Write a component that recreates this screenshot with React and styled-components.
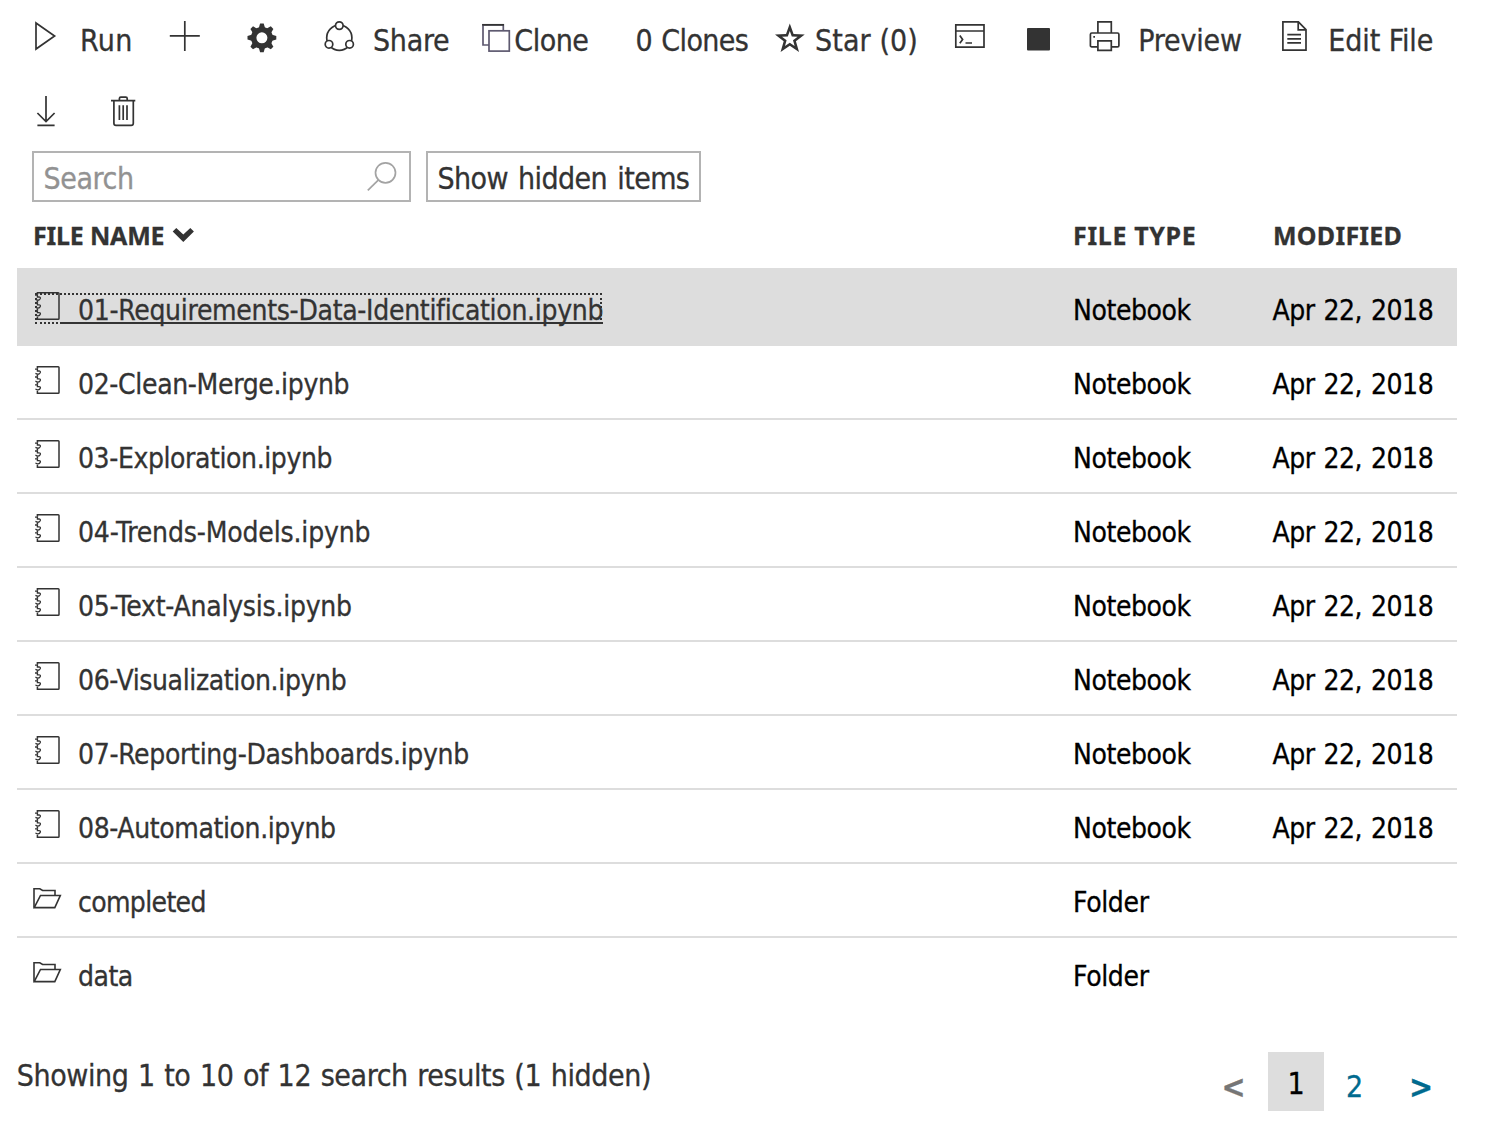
import React from 'react';
import styled, { createGlobalStyle } from 'styled-components';

const GlobalStyle = createGlobalStyle`
  * { box-sizing: border-box; }
  body {
    margin: 0;
    background: #fff;
    color: #333;
    font-family: "DejaVu Sans Condensed", "DejaVu Sans", sans-serif;
    font-size: 30px;
    line-height: 40px;
    -webkit-text-stroke: 0.3px currentColor;
  }
`;

const Page = styled.main`
  width: 1500px;
  height: 1142px;
  padding: 18px 43px 0 17px;
  overflow: hidden;
`;

const Text = styled.span`
  letter-spacing: ${(p) => p.$ls || 0}px;
  word-spacing: ${(p) => p.$ws || 0}px;
  white-space: pre;
`;

const Toolbar = styled.div`
  display: flex;
  flex-wrap: wrap;
  padding-left: 15px;
  row-gap: 35px;
`;

const ToolButton = styled.div`
  display: flex;
  align-items: flex-start;
  flex: none;
  width: ${(p) => p.$w}px;
  height: 40px;
  gap: ${(p) => p.$gap || 0}px;
`;

const ToolLabel = styled(Text)`
  padding-top: 3px;
`;

const Glyph = styled.svg`
  flex: none;
  display: block;
  fill: none;
  stroke: ${(p) => p.$color || '#333'};
  stroke-width: ${(p) => p.$sw || 1.7};
`;

const Filters = styled.div`
  display: flex;
  gap: 15px;
  padding: 18px 0 0 15px;
`;

const SearchBox = styled.div`
  display: flex;
  justify-content: space-between;
  width: 379px;
  height: 51px;
  padding: 5px 10px 0 9.5px;
  border: 2px solid #b3b3b3;
  color: #929292;
`;

const HiddenButton = styled.div`
  width: 275px;
  height: 51px;
  padding: 6px 0 0 9.5px;
  border: 2px solid #b3b3b3;
`;

const Placeholder = styled(Text)`
  padding-top: 1px;
`;

const Row = styled.div`
  display: grid;
  grid-template-columns: 1040px 199.5px 1fr;
  align-items: start;
  height: ${(p) => (p.$active ? 78 : 74)}px;
  padding: ${(p) => (p.$active ? 22 : 18)}px 0 0 16px;
  background: ${(p) => (p.$active ? '#ddd' : 'transparent')};
  border-bottom: 2px solid ${(p) => (p.$last ? 'transparent' : '#ddd')};
  font-size: 28px;
`;

const HeaderRow = styled.div`
  display: grid;
  grid-template-columns: 1040px 200px 1fr;
  height: 66px;
  padding: 13px 0 0 16px;
  font: bold 25px/40px "Noto Sans", sans-serif;
`;

const HeaderCell = styled.div`
  display: flex;
  gap: 8px;
`;

const Cell = styled(Text)`
  padding-top: 1px;
  color: #000;
`;

const FileLink = styled.div`
  position: relative;
  display: flex;
  width: max-content;
`;

const FileName = styled(Text)`
  position: relative;
  padding: 1px 0 0 16px;
`;

const FocusRing = styled.span`
  position: absolute;
  inset: 3px 1px 7px 2px;
  border: 2px dotted #333;
`;

const Underline = styled.span`
  position: absolute;
  left: 0;
  right: 0;
  bottom: 7px;
  height: 2px;
  background: #333;
`;

const Footer = styled.footer`
  display: flex;
  justify-content: space-between;
  padding-top: 40px;
`;

const Summary = styled(Text)`
  padding-top: 4px;
  margin-left: -0.3px;
`;

const Pager = styled.div`
  display: flex;
`;

const PageItem = styled.div`
  width: ${(p) => p.$w}px;
  height: 59px;
  padding-top: ${(p) => (p.$active ? 12 : 15)}px;
  text-align: center;
  color: ${(p) => p.$color};
  background: ${(p) => (p.$active ? '#ddd' : 'transparent')};
  font-weight: ${(p) => (p.$bold ? 700 : 400)};
  font-size: ${(p) => (p.$bold ? 32 : 30)}px;
`;

const star = (cx, cy, R) =>
  'M' +
  Array.from({ length: 10 }, (_, i) => {
    const r = i % 2 ? R * 0.41 : R;
    const a = (Math.PI * i) / 5;
    return `${(cx + r * Math.sin(a)).toFixed(2)} ${(cy - r * Math.cos(a)).toFixed(2)}`;
  }).join('L') +
  'Z';

const icons = {
  run: <path d="M4 5L22.6 18L4 31Z" />,
  plus: <path d="M16.8 3V33M1.8 17.9H31.8" />,
  gear: (
    <g transform="translate(15.9 19.8)">
      <circle r="8.2" strokeWidth="5.4" />
      {[0, 45, 90, 135, 180, 225, 270, 315].map((a) => (
        <path key={a} transform={`rotate(${a})`} d="M-3.2 -9.5L-1.8 -14.4H1.8L3.2 -9.5Z" fill="#333" stroke="none" />
      ))}
    </g>
  ),
  share: (
    <>
      <circle cx="16.3" cy="19.7" r="12.6" />
      <g fill="#fff">
        <circle cx="16.3" cy="7.6" r="3.8" />
        <circle cx="6" cy="26.3" r="3.8" />
        <circle cx="26.6" cy="26.3" r="3.8" />
      </g>
    </>
  ),
  clone: (
    <g stroke="#5e5a70">
      <path d="M8 27H2V6.8H22.3V12" />
      <path d="M1.2 6.8H23" stroke="#333" />
      <rect x="8" y="12.8" width="20.3" height="20.3" fill="#fff" />
    </g>
  ),
  star: <path d={star(14.8, 21.3, 15.7) + star(14.8, 21.3, 8.2)} fill="#333" fillRule="evenodd" stroke="none" />,
  terminal: (
    <>
      <path d="M2.8 6.9H31V29.2H2.8ZM2.8 13H31" />
      <path d="M6.8 17.6L9.6 21.4L6.8 25.2M12.5 25H19" />
    </>
  ),
  stop: <rect x="4" y="10" width="23" height="22.6" rx="1" fill="#333" stroke="none" />,
  printer: (
    <>
      <path d="M9.9 15V3.8H23.3V15" />
      <path d="M9.6 28.8H3.8Q2.4 28.8 2.4 27.4V16.4Q2.4 15 3.8 15H29.5Q30.9 15 30.9 16.4V27.4Q30.9 28.8 29.5 28.8H23.6" />
      <path d="M9.9 22.8H23.3V32.4H9.9Z" />
      <path d="M5.3 18.9H7" />
    </>
  ),
  file: (
    <>
      <path d="M2.9 3.9H18.4L26 11.7V32.2H2.9Z" />
      <path d="M18.2 4V11.8H26M7.3 16.7H21M7.3 20.8H21M7.3 24.9H21" />
    </>
  ),
  download: <path d="M14 3V28M5.4 20L14 28.6L22.6 20M5.4 32.3H22.6" />,
  trash: (
    <>
      <path d="M4 7.6H28.3M12.4 7.5V5.6Q12.4 4.2 13.8 4.2H18.8Q20.2 4.2 20.2 5.6V7.5" />
      <path d="M6.9 7.6V30.2Q6.9 32.3 9 32.3H24.2Q26.3 32.3 26.3 30.2V7.6" />
      <path d="M12.4 12.2V27M16.2 12.2V27M20 12.2V27" />
    </>
  ),
};

const tools = [
  { icon: 'run', w: 136, gap: 16, label: 'Run', ls: 0.4 },
  { icon: 'plus', w: 78 },
  { icon: 'gear', w: 77 },
  { icon: 'share', w: 158, gap: 18, label: 'Share', ls: -0.3 },
  { icon: 'clone', w: 154.5, gap: 1.3, label: 'Clone', ls: -0.5 },
  { w: 139.5, label: '0 Clones', ls: -0.65, ws: 1.4 },
  { icon: 'star', w: 178, gap: 8, label: 'Star (0)', ls: 0.1 },
  { icon: 'terminal', w: 70 },
  { icon: 'stop', w: 65 },
  { icon: 'printer', w: 192, gap: 18.3, label: 'Preview', ls: -0.2 },
  { icon: 'file', w: 160, gap: 16.3, label: 'Edit File', ls: -0.1 },
  { icon: 'download', w: 75 },
  { icon: 'trash', w: 32 },
];

const files = [
  ['01-Requirements-Data-Identification.ipynb', -0.3],
  ['02-Clean-Merge.ipynb', -0.35],
  ['03-Exploration.ipynb', -0.41],
  ['04-Trends-Models.ipynb', -0.16],
  ['05-Text-Analysis.ipynb', -0.24],
  ['06-Visualization.ipynb', -0.37],
  ['07-Reporting-Dashboards.ipynb', -0.32],
  ['08-Automation.ipynb', -0.39],
  ['completed', -0.65, true],
  ['data', -0.5, true],
];

const NotebookIcon = () => (
  <Glyph width="29" height="32" $sw={1.5}>
    <path d="M4.4 4.8V2.8H25.2Q26 2.8 26 3.6V28.4Q26 29.2 25.2 29.2H4.4V26.8M4.4 10.6V12.6M4.4 18.4V20.4" />
    {[5.2, 13, 20.8].map((y) => (
      <path key={y} strokeWidth="1.3" d={`M2 ${y}H4.4V${y + 1.8}H6Q7.6 ${y + 1.8} 7.4 ${y + 3.2}Q6.6 ${y + 5.4} 4.4 ${y + 5}L2.4 ${y + 4.2}`} />
    ))}
  </Glyph>
);

const FolderIcon = () => (
  <Glyph width="29" height="32" $sw={1.6}>
    <path d="M1 25.5V6.8H6.8L9.6 8.5H22V13.2" />
    <path d="M1.2 25.6L7.5 13.5H27.3L21.8 25.6Z" />
  </Glyph>
);

export default function App() {
  return (
    <>
      <GlobalStyle />
      <Page>
        <Toolbar>
          {tools.map((t) => (
            <ToolButton key={t.icon || t.label} $w={t.w} $gap={t.gap}>
              {t.icon && <Glyph width="32" height="40">{icons[t.icon]}</Glyph>}
              {t.label && <ToolLabel $ls={t.ls} $ws={t.ws}>{t.label}</ToolLabel>}
            </ToolButton>
          ))}
        </Toolbar>
        <Filters>
          <SearchBox>
            <Placeholder $ls={-0.4}>Search</Placeholder>
            <Glyph width="32" height="34" $color="#a3a3a3">
              <circle cx="18.5" cy="14.8" r="10" />
              <path d="M11.5 21.8L0.8 32.3" />
            </Glyph>
          </SearchBox>
          <HiddenButton>
            <Text $ls={-0.6} $ws={2.2}>Show hidden items</Text>
          </HiddenButton>
        </Filters>
        <HeaderRow>
          <HeaderCell>
            <Text $ls={-0.2}>FILE NAME</Text>
            <Glyph width="24" height="32">
              <path d="M0.7 16.5L4.3 13L11.3 19.6L18.3 13L21.9 16.5L11.3 27Z" fill="#333" stroke="none" />
            </Glyph>
          </HeaderCell>
          <Text $ls={0.65}>FILE TYPE</Text>
          <Text $ls={0.25}>MODIFIED</Text>
        </HeaderRow>
        {files.map(([name, ls, folder], i) => (
          <Row key={name} $active={i === 0} $last={i === 0 || i === files.length - 1}>
            <FileLink>
              {folder ? <FolderIcon /> : <NotebookIcon />}
              <FileName $ls={ls}>
                {i === 0 && <Underline />}
                {name}
              </FileName>
              {i === 0 && <FocusRing />}
            </FileLink>
            <Cell $ls={folder ? -0.35 : -0.41}>{folder ? 'Folder' : 'Notebook'}</Cell>
            {!folder && <Cell $ls={-0.45} $ws={1.2}>Apr 22, 2018</Cell>}
          </Row>
        ))}
        <Footer>
          <Summary $ls={-0.4} $ws={1.3}>Showing 1 to 10 of 12 search results (1 hidden)</Summary>
          <Pager>
            <PageItem $w={69} $color="#767676" $bold>&lt;</PageItem>
            <PageItem $w={56} $color="#000" $active>1</PageItem>
            <PageItem $w={61} $color="#006a8e">2</PageItem>
            <PageItem $w={72} $color="#006a8e" $bold>&gt;</PageItem>
          </Pager>
        </Footer>
      </Page>
    </>
  );
}
